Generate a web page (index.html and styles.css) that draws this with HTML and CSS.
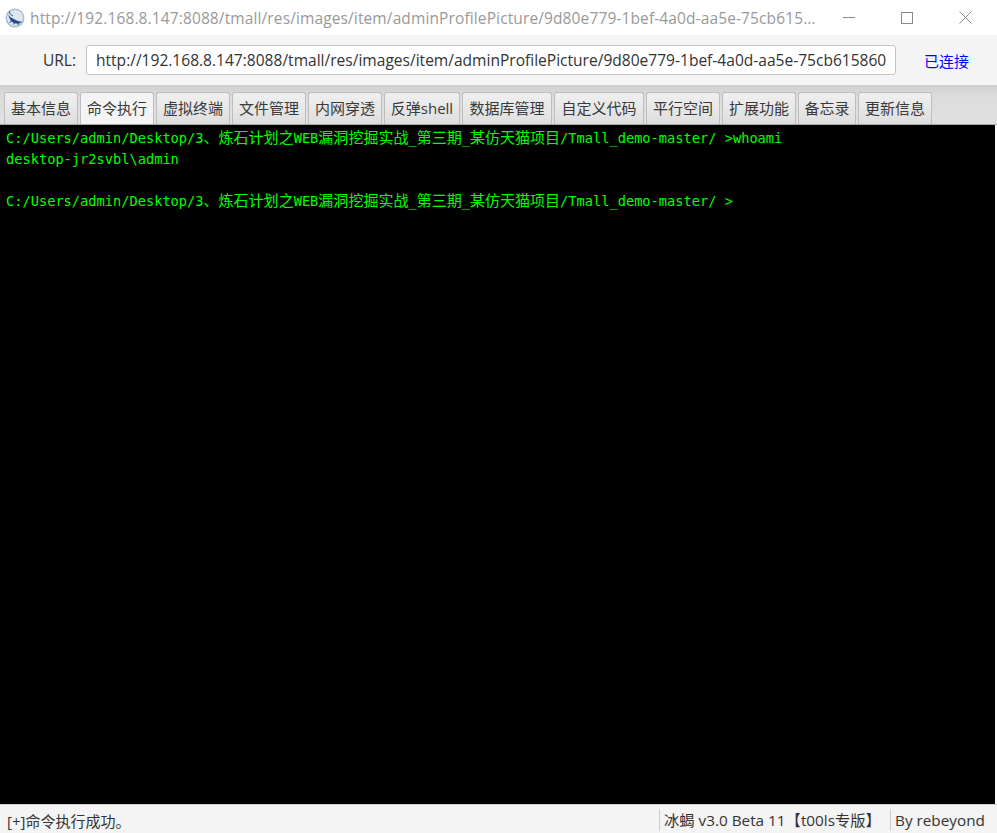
FILE: index.html
```html
<!DOCTYPE html>
<html lang="zh-CN">
<head>
<meta charset="utf-8">
<title>冰蝎</title>
<link rel="stylesheet" href="styles.css">
</head>
<body>
<div class="window">
  <header class="titlebar">
    <svg class="app-icon" width="20" height="20" viewBox="0 0 20 20" aria-hidden="true">
      <circle cx="10" cy="10" r="9.5" fill="#a9bdd0"/>
      <circle cx="10" cy="10" r="8" fill="#dfe7ee"/>
      <path d="M2.500 5c1 3 3 4.500 5.500 5.500s4 3 9 3c-2 2.500-5 2.500-8 1.500S4.500 11 2.500 5z" fill="#27488a"/>
      <path d="M4.500 3.500c0 2.500 1.500 3.500 3.500 4.500M7 12l-2.500 3M10 13.500l-1.500 3M13 14l0 3" stroke="#27488a" stroke-width="1" fill="none"/>
    </svg>
    <span class="title-text">http://192.168.8.147:8088/tmall/res/images/item/adminProfilePicture/9d80e779-1bef-4a0d-aa5e-75cb615...</span>
    <div class="win-controls">
      <svg width="12" height="12" viewBox="0 0 12 12" aria-hidden="true"><path d="M0 5.500h12" stroke="#8a8a8a" fill="none"/></svg>
      <svg width="12" height="12" viewBox="0 0 12 12" aria-hidden="true"><rect x=".5" y=".5" width="11" height="11" stroke="#8a8a8a" fill="none"/></svg>
      <svg width="13" height="13" viewBox="0 0 13 13" aria-hidden="true"><path d="M.5.5l12 12M12.500.5l-12 12" stroke="#8a8a8a" fill="none"/></svg>
    </div>
  </header>
  <section class="urlbar">
    <label class="url-label">URL:</label>
    <div class="url-input">http://192.168.8.147:8088/tmall/res/images/item/adminProfilePicture/9d80e779-1bef-4a0d-aa5e-75cb615860</div>
    <span class="conn-state">已连接</span>
  </section>
  <nav class="tabs">
    <div class="tab w74">基本信息</div>
    <div class="tab w74 active">命令执行</div>
    <div class="tab w74">虚拟终端</div>
    <div class="tab w74">文件管理</div>
    <div class="tab w74">内网穿透</div>
    <div class="tab w76">反弹shell</div>
    <div class="tab w90">数据库管理</div>
    <div class="tab w90">自定义代码</div>
    <div class="tab w74">平行空间</div>
    <div class="tab w74">扩展功能</div>
    <div class="tab w58">备忘录</div>
    <div class="tab w74">更新信息</div>
  </nav>
  <main class="terminal"><div class="line">C:/Users/admin/Desktop/3<span class="cjk">、炼石计划之</span>WEB<span class="cjk">漏洞挖掘实战</span>_<span class="cjk">第三期</span>_<span class="cjk">某仿天猫项目</span>/Tmall_demo-master/ &gt;whoami</div><div class="line">desktop-jr2svbl\admin</div><div class="line">&nbsp;</div><div class="line">C:/Users/admin/Desktop/3<span class="cjk">、炼石计划之</span>WEB<span class="cjk">漏洞挖掘实战</span>_<span class="cjk">第三期</span>_<span class="cjk">某仿天猫项目</span>/Tmall_demo-master/ &gt;</div></main>
  <footer class="statusbar">
    <span class="status-msg">[+]命令执行成功。</span>
    <span class="status-cell version">冰蝎 v3.0 Beta 11【t00ls专版】</span>
    <span class="status-cell author">By rebeyond</span>
  </footer>
</div>
</body>
</html>
```
FILE: styles.css
```css
* { box-sizing: border-box; }
html, body { margin: 0; height: 100%; }
body { background: #fff; overflow: hidden; }
.window {
  width: 997px; height: 833px;
  display: flex; flex-direction: column;
  font-family: "Open Sans", "Noto Sans CJK SC", sans-serif;
  font-size: 15px; color: #333;
}
.titlebar {
  height: 35px; flex: none; background: #fff;
  display: flex; align-items: center; padding-left: 5px; position: relative;
}
.app-icon { flex: none; margin-right: 5px; }
.title-text { color: #999; font-size: 15.5px; letter-spacing: 0.12px; white-space: nowrap; }
.win-controls {
  margin-left: auto; display: flex; align-items: center; gap: 46px; padding-right: 25px;
}
.urlbar {
  height: 50px; flex: none; background: #f4f4f4;
  display: flex; align-items: center; padding: 0 0 0 43px;
}
.url-label { width: 43px; flex: none; font-size: 15.5px; }
.url-input {
  width: 810px; height: 30px; flex: none;
  background: #fff; border: 1px solid #c4c4c4; border-radius: 3px;
  padding: 0 9px; line-height: 28px; white-space: nowrap; overflow: hidden; color: #333;
  font-size: 15.55px;
}
.conn-state { color: #0000ff; margin-left: 28px; }
.tabs {
  height: 40px; flex: none;
  background: linear-gradient(#cfcfcf, #dcdcdc 30%, #e0e0e0);
  border-bottom: 1px solid #a8a8a8;
  display: flex; align-items: flex-end; gap: 2px; padding-left: 4px;
}
.tab {
  height: 32px; flex: none; text-align: center; line-height: 31px;
  border: 1px solid #bdbdbd; border-bottom: 0; border-radius: 3px 3px 0 0;
  background: linear-gradient(#f0f0f0, #dedede);
  white-space: nowrap; color: #3a3a3a;
}
.tab.active { background: #f4f4f4; }
.w58 { width: 58px; } .w74 { width: 74px; } .w76 { width: 76px; } .w90 { width: 90px; }
.terminal {
  flex: 1; background: #000; margin-right: 2px; padding: 3px 0 0 6px;
  color: #00ff00; font-family: "DejaVu Sans Mono", "Noto Sans CJK SC", monospace; font-size: 13.68px;
}
.line { height: 21px; line-height: 21px; white-space: pre; }
.cjk { font-family: "Noto Sans CJK SC", sans-serif; font-size: 15.03px; line-height: 0; }
.statusbar {
  height: 29px; flex: none; background: #f4f4f4; border-top: 1px solid #ccc;
  display: flex; align-items: center; padding-left: 7px; padding-top: 2px;
}
.status-msg { flex: 1; }
.status-cell { border-left: 1px solid #ccc; height: 22px; line-height: 22px; white-space: nowrap; font-size: 15.3px; }
.version { width: 231px; padding-left: 4px; }
.author { width: 107px; padding-left: 4px; }
```
